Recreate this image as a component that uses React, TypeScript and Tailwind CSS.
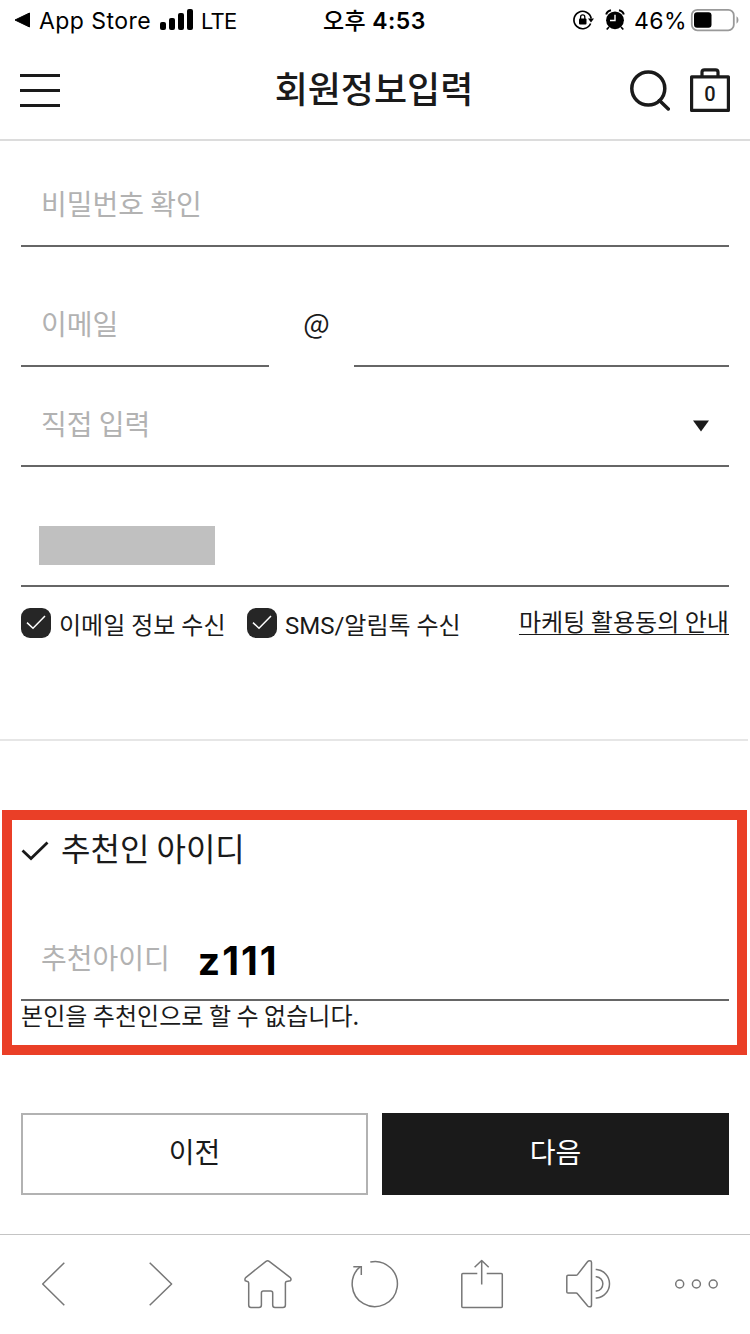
import type { ReactNode } from 'react';

function Tick({ label, className }: { label: string; className: string }) {
  return (
    <label className={`flex items-start ${className}`}>
      <span className="flex h-[30px] w-[30px] shrink-0 items-center justify-center rounded-[9px] bg-[#262626]">
        <svg width="30" height="30" viewBox="0 0 30 30" fill="none" stroke="#fff" strokeWidth="1.5">
          <path d="M6 14.6 L12 20.3 L24 8" />
        </svg>
      </span>
      <span className="ml-2 mt-[2px] whitespace-nowrap text-[24px] leading-[32px] font-['Roboto','Noto_Sans_CJK_KR',sans-serif]">{label}</span>
    </label>
  );
}

function Field({ children, className = '' }: { children?: ReactNode; className?: string }) {
  return (
    <div className={`flex h-20 items-center border-b-2 border-[#666] pb-[6px] pl-5 text-[28px] leading-10 text-[#b2b2b2] ${className}`}>
      {children}
    </div>
  );
}

function ToolIcon({ children }: { children: ReactNode }) {
  return (
    <button className="h-[99px] w-[107px]">
      <svg width="107" height="99" viewBox="0 0 107 99" fill="none" stroke="#777" strokeWidth="1.5" strokeLinejoin="round">
        {children}
      </svg>
    </button>
  );
}

function StatusBar() {
  return (
    <div className="flex h-10 items-center text-[23px] leading-10 text-black font-['Inter','Noto_Sans_CJK_KR',sans-serif]">
      <div className="flex w-[323px] items-center pl-[14px]">
        <svg width="17" height="16" viewBox="0 0 17 16">
          <path d="M1 8 L15.5 1 V15 Z" fill="#000" stroke="#000" strokeLinejoin="round" />
        </svg>
        <span className="ml-2 mt-0.5 w-[120px] whitespace-nowrap tracking-[0.45px]">App Store</span>
        <svg className="ml-px" width="33" height="22" viewBox="0 0 33 22">
          <rect x="0" y="13" width="6" height="8" rx="2" />
          <rect x="9" y="9" width="6" height="12" rx="2" />
          <rect x="18" y="4" width="6" height="17" rx="2" />
          <rect x="27" y="0" width="6" height="21" rx="2" />
        </svg>
        <span className="ml-[8px] mt-0.5 text-[22px] tracking-[-0.8px]">LTE</span>
      </div>
      <div className="mt-0.5 w-[249px] whitespace-nowrap font-semibold tracking-[0.4px]"><span className="font-medium">오후</span> 4:53</div>
      <svg width="22" height="22" viewBox="0 0 22 22" fill="none" stroke="#000" strokeWidth="1.7">
        <path d="M18.6 14.5 A8.7 8.7 0 1 1 19.2 9.5" />
        <path d="M16 9.5 H22 L19 13.5 Z" fill="#000" stroke="none" />
        <rect x="7" y="9.5" width="7.5" height="6" rx="1" fill="#000" stroke="none" />
        <path d="M8.6 10 V8 a2.1 2.1 0 0 1 4.2 0 V10" strokeWidth="1.3" />
      </svg>
      <svg className="ml-[11px]" width="20" height="22" viewBox="0 0 20 22">
        <circle cx="10" cy="11.3" r="8.9" />
        <path d="M1.2 5.5 Q2 2 6 1.2 M18.8 5.5 Q18 2 14 1.2" stroke="#000" strokeWidth="2" fill="none" />
        <path d="M4 18 L1.7 20.5 M16 18 L18.3 20.5" stroke="#000" strokeWidth="1.7" />
        <path d="M10 5.8 V11.5 H5" stroke="#fff" strokeWidth="1.4" fill="none" />
      </svg>
      <span className="ml-[9px] mt-0.5 w-[53px] whitespace-nowrap tracking-[0.4px]">46%</span>
      <svg className="ml-[3px]" width="50" height="24" viewBox="0 0 50 24">
        <rect x="1.8" y="1.8" width="42" height="20.5" rx="5.5" fill="none" stroke="#999" strokeWidth="1.8" />
        <rect x="4" y="4.3" width="17.5" height="15.5" rx="3" />
        <path d="M46.5 8.3 Q48.5 9.5 48.5 12 Q48.5 14.5 46.5 15.7 Z" fill="#999" />
      </svg>
    </div>
  );
}

export default function App() {
  return (
    <div className="flex h-[1334px] w-[750px] flex-col overflow-hidden bg-white text-[#1a1a1a] font-['Noto_Sans_CJK_KR',sans-serif]">
      <StatusBar />
      <header className="flex h-[101px] items-center justify-between border-b-2 border-[#dcdcdc] px-5">
        <button className="mt-px flex w-[100px] flex-col gap-3">
          <span className="h-[3px] w-10 bg-[#1a1a1a]" />
          <span className="h-[3px] w-10 bg-[#1a1a1a]" />
          <span className="h-[3px] w-10 bg-[#1a1a1a]" />
        </button>
        <h1 className="-ml-[2px] pb-[6px] text-[36px] font-medium leading-[52px]">회원정보입력</h1>
        <div className="flex w-[100px] gap-5">
          <svg width="40" height="44" viewBox="0 0 40 44" fill="none" stroke="#1a1a1a" strokeWidth="3.5">
            <circle cx="18.3" cy="20.5" r="16.5" />
            <path d="M29.5 32.5 L38.3 41" strokeLinecap="round" />
          </svg>
          <div className="relative flex h-11 w-10 items-center justify-center">
            <svg className="absolute inset-0" width="40" height="44" viewBox="0 0 40 44" fill="none" stroke="#1a1a1a" strokeWidth="3.2" strokeLinejoin="round">
              <rect x="1.6" y="8.8" width="36.8" height="33.6" />
              <path d="M12 8 V4 Q12 1.8 14.5 1.8 H25.5 Q28 1.8 28 4 V8" />
            </svg>
            <span className="relative mt-[9px] text-[20px] font-medium leading-5 font-['Roboto',sans-serif]">0</span>
          </div>
        </div>
      </header>

      <main className="flex h-[1093px] flex-col">
        <form className="mx-[21px] mt-[26px] flex flex-col">
          <Field>비밀번호 확인</Field>
          <div className="mt-10 flex">
            <Field className="w-[248px]">이메일</Field>
            <span className="flex w-[85px] items-center justify-center pb-[11px] pl-[10px] text-[28px]">@</span>
            <Field className="w-[375px]" />
          </div>
          <Field className="mt-5 justify-between pr-5">
            직접 입력
            <svg className="mt-[6px]" width="16" height="12" viewBox="0 0 16 12" fill="#1a1a1a">
              <path d="M0 0.5 H16 L8 11.5 Z" />
            </svg>
          </Field>
          <Field className="mt-10">
            <span className="-ml-[2px] mt-[4px] h-[39px] w-44 bg-[#c0c0c0]" />
          </Field>
          <div className="mt-[21px] flex h-8 items-start">
            <Tick label="이메일 정보 수신" className="w-[226px]" />
            <Tick label="SMS/알림톡 수신" className="w-[272px]" />
            <a className="-mt-[3px] whitespace-nowrap text-[24px] leading-[32px] tracking-[0.05px] underline decoration-1 underline-offset-[3px]">마케팅 활용동의 안내</a>
          </div>
        </form>

        <hr className="mt-[99px] w-[748px] border-t-2 border-[#e6e6e6]" />

        <section className="ml-[2px] mt-[69px] h-[245px] w-[745px] border-[10px] border-[#ea3f27] pl-[9px] pr-2">
          <h2 className="flex h-[60px] items-center text-[32px]">
            <svg className="mr-3 mt-px" width="28" height="20" viewBox="0 0 28 20" fill="none" stroke="#1a1a1a" strokeWidth="2.8">
              <path d="M1.5 9.5 L10 17.5 L26.5 1.5" />
            </svg>
            <span className="pb-[7px] leading-[48px]">추천인 아이디</span>
          </h2>
          <Field className="mt-[41px]">
            추천아이디
            <span className="ml-[28px] mt-[8px] text-[39px] font-bold tracking-[2px] text-black font-['Inter',sans-serif]">z111</span>
          </Field>
          <p className="-mt-[2px] text-[24px] leading-[32px] tracking-[0.05px]">본인을 추천인으로 할 수 없습니다.</p>
        </section>

        <div className="mx-[21px] mt-[58px] flex h-[82px] gap-[14px] text-[28px]">
          <button className="w-[347px] border-2 border-[#b2b2b2] pb-[6px]">이전</button>
          <button className="w-[347px] bg-[#1a1a1a] pb-[6px] text-white">다음</button>
        </div>
      </main>

      <nav className="flex h-[100px] border-t border-[#c4c4c4]">
        <ToolIcon><path d="M64.3 27.7 L42.7 49 L64.3 70.3" /></ToolIcon>
        <ToolIcon><path d="M42.7 27.7 L64.6 49 L42.7 70.3" /></ToolIcon>
        <ToolIcon>
          <path d="M52 26.3 Q53.7 25.2 55.2 26.3 L76 42.3 Q77.8 44 76.4 45.8 L72.5 46.5 Q71.4 46.8 71.4 48 V70 Q71.4 72.5 69 72.5 H61 Q58.7 72.5 58.7 70 V58 Q58.7 56 56.7 56 H49.3 Q47.4 56 47.4 58 V70 Q47.4 72.5 45 72.5 H37 Q34.7 72.5 34.7 70 V48 Q34.7 46.8 33.5 46.5 L31.3 45.8 Q30.3 44 32 42.3 Z" />
        </ToolIcon>
        <ToolIcon>
          <path d="M50 26.9 A22.6 22.6 0 1 1 40 31.7" transform="translate(-0.7 0)" />
          <path d="M32.3 31.7 H40.3 V40" strokeLinejoin="miter" />
        </ToolIcon>
        <ToolIcon>
          <path d="M49.3 38.4 H34.8 Q33.8 38.4 33.8 39.4 V71.4 Q33.8 72.4 34.8 72.4 H73.3 Q74.3 72.4 74.3 71.4 V39.4 Q74.3 38.4 73.3 38.4 H58.7" />
          <path d="M53.7 49.5 V25.5 M46.6 32.3 L53.7 25.5 L60.7 32.3" />
        </ToolIcon>
        <ToolIcon>
          <path d="M33 40.3 H41 Q42 40.3 42.7 39.4 L52.3 27 Q53.2 25.8 54.8 25.8 Q56.5 25.8 56.5 27.5 V70 Q56.5 71.8 54.8 71.8 Q53.2 71.8 52.3 70.6 L42.7 59 Q42 58 41 58 H33 Q31.8 58 31.8 57 V41.5 Q31.8 40.3 33 40.3 Z" />
          <path d="M60.7 41.7 H61.5 A7.2 7.2 0 0 1 61.5 56 H60.7 M60.7 34.4 H61.8 A14.4 14.4 0 0 1 61.8 63 H60.7" />
        </ToolIcon>
        <ToolIcon>
          <circle cx="37.7" cy="49" r="4" />
          <circle cx="54.4" cy="49" r="4" />
          <circle cx="71.2" cy="49" r="4" />
        </ToolIcon>
      </nav>
    </div>
  );
}
